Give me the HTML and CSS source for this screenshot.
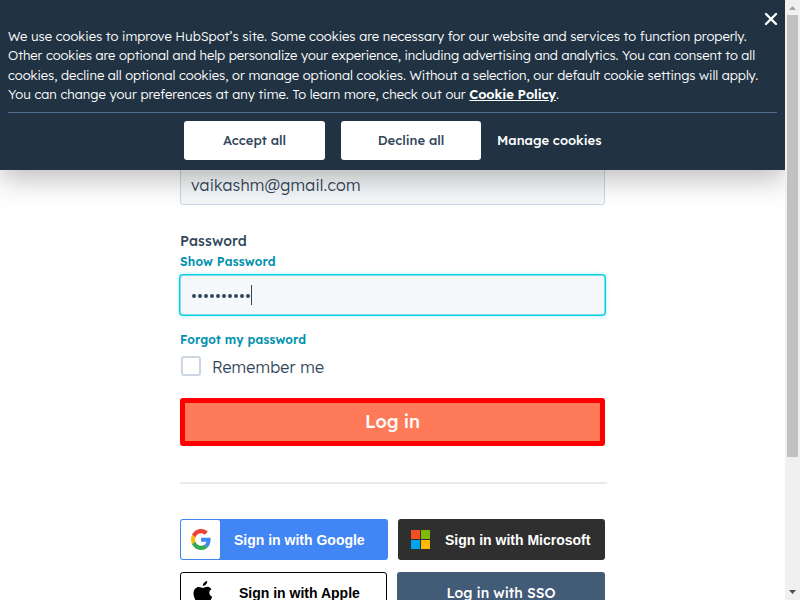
FILE: index.html
```html
<!DOCTYPE html>
<html lang="en">
<head>
<meta charset="utf-8">
<title>HubSpot Login</title>
<link rel="stylesheet" href="styles.css">
</head>
<body>
<div class="viewport">
  <main class="page">
    <form class="login">
      <div class="field email"><span class="email-text">vaikashm@gmail.com</span></div>
      <div class="label"><span class="label-text">Password</span></div>
      <div class="link"><span class="show-text">Show Password</span></div>
      <div class="field password">
        <span class="dots"><i></i><i></i><i></i><i></i><i></i><i></i><i></i><i></i><i></i><i></i></span><span class="caret"></span>
      </div>
      <div class="link forgot"><span class="forgot-text">Forgot my password</span></div>
      <div class="remember"><span class="checkbox"></span><span class="remember-text">Remember me</span></div>
      <div class="submit"><span class="submit-text">Log in</span></div>
      <div class="divider"></div>
      <div class="providers">
        <div class="provider google">
          <span class="google-logo"><svg width="20" height="21" viewBox="0 0 48 48" preserveAspectRatio="none"><path fill="#ea4335" d="M24 9.5c3.54 0 6.71 1.22 9.21 3.6l6.85-6.85C35.9 2.38 30.47 0 24 0 14.62 0 6.51 5.38 2.56 13.22l7.98 6.19C12.43 13.72 17.74 9.5 24 9.5z"/><path fill="#4285f4" d="M46.98 24.55c0-1.57-.15-3.09-.38-4.55H24v9.02h12.94c-.58 2.96-2.26 5.48-4.78 7.18l7.73 6c4.51-4.18 7.09-10.36 7.09-17.65z"/><path fill="#fbbc05" d="M10.53 28.59A14.5 14.5 0 0 1 9.77 24c0-1.6.27-3.14.76-4.59l-7.98-6.19A24 24 0 0 0 0 24c0 3.88.92 7.54 2.56 10.78z"/><path fill="#34a853" d="M24 48c6.48 0 11.93-2.13 15.89-5.81l-7.73-6c-2.15 1.45-4.92 2.3-8.16 2.3-6.26 0-11.57-4.22-13.47-9.91l-7.98 6.19C6.51 42.62 14.62 48 24 48z"/></svg></span>
          <span class="google-text">Sign in with Google</span>
        </div>
        <div class="provider microsoft">
          <span class="squares"><i class="red"></i><i class="green"></i><i class="blue"></i><i class="yellow"></i></span>
          <span class="microsoft-text">Sign in with Microsoft</span>
        </div>
        <div class="provider apple">
          <svg class="apple-logo" width="20" height="24" viewBox="0 0 20 24"><path d="M14.200 0c.2 2.500-1.800 5-4.400 5C9.600 2.600 11.800.4 14.200 0zM18.400 8.200c-3.100 1.900-2.600 6.200.7 7.500-.9 2.900-3 6.300-5.100 6.300-1.600 0-2.300-.9-4.200-.9S7.800 22 6.200 22C3.600 22 .5 16.700.5 12.500.5 8.200 3.200 6 5.800 6c1.800 0 3.100 1 4.200 1 1 0 2.500-1.200 4.600-1.200 1.600 0 2.900.9 3.800 2.400z"/></svg>
          <span class="apple-text">Sign in with Apple</span>
        </div>
        <div class="provider sso"><span class="sso-text">Log in with SSO</span></div>
      </div>
    </form>
    <section class="banner">
      <svg class="close" width="14" height="14" viewBox="0 0 14 14"><path d="M2 2l10 10M12 2L2 12"/></svg>
      <p class="notice">
        <span class="line line-1">We use cookies to improve HubSpot’s site. Some cookies are necessary for our website and services to function properly.</span>
        <span class="line line-2">Other cookies are optional and help personalize your experience, including advertising and analytics. You can consent to all</span>
        <span class="line line-3">cookies, decline all optional cookies, or manage optional cookies. Without a selection, our default cookie settings will apply.</span>
        <span class="line line-4">You can change your preferences at any time. To learn more, check out our <a class="policy">Cookie Policy</a>.</span>
      </p>
      <div class="actions">
        <span class="choice"><span class="accept-text">Accept all</span></span>
        <span class="choice decline"><span class="decline-text">Decline all</span></span>
        <span class="manage">Manage cookies</span>
      </div>
    </section>
  </main>
  <aside class="scrollbar">
    <svg width="7" height="4" viewBox="0 0 7 4"><path fill="#a3a3a3" d="M0 4 3.500 0 7 4z"/></svg>
    <span class="thumb"></span>
    <svg class="down" width="7" height="4" viewBox="0 0 7 4"><path fill="#505050" d="M0 0h7L3.500 4z"/></svg>
  </aside>
</div>
</body>
</html>
```

FILE: styles.css
```css
* { box-sizing: border-box; }
body {
  margin: 0;
  overflow: hidden;
  background: #fff;
  color: #33475b;
  font-family: "Lexend Deca", Lexend, Inter, sans-serif;
  font-weight: 300;
}
span { white-space: nowrap; }
.viewport { display: flex; width: 800px; height: 600px; overflow: hidden; }
.page { position: relative; width: 785px; overflow: hidden; }
.login { width: 425px; margin-left: 180px; padding-top: 165px; }
.field {
  display: flex;
  align-items: center;
  height: 40px;
  padding: 0 10px;
  border: 1px solid #cbd6e2;
  border-radius: 3px;
  background: #f5f8fa;
  font-size: 16px;
}
.email-text { letter-spacing: .19px; }
.label { height: 24px; margin-top: 24px; line-height: 24px; font-size: 14px; font-weight: 500; letter-spacing: .12px; }
.link { height: 18px; line-height: 18px; font-size: 12px; font-weight: 600; color: #0091ae; letter-spacing: .18px; }
.forgot-text { letter-spacing: .14px; }
.password {
  margin-top: 4px;
  border-color: #7fdee9;
  box-shadow: 0 0 0 1px #00d0e4, 0 0 4px 1px rgba(0, 208, 228, .3);
}
.dots { display: flex; gap: 2px; padding: 1px 0 0 .5px; }
.dots i { width: 4px; height: 4px; border-radius: 50%; background: #33475b; }
.caret { width: 1px; height: 20px; margin-left: 1.500px; background: #33475b; }
.forgot { margin-top: 16px; }
.remember { display: flex; align-items: center; height: 20px; margin-top: 7px; font-size: 16px; }
.remember-text { padding-top: 2px; letter-spacing: .18px; }
.checkbox { width: 20px; height: 20px; margin: 0 11px 0 1px; border: 2px solid #cbd6e2; border-radius: 3px; }
.submit {
  display: flex;
  align-items: center;
  justify-content: center;
  height: 48px;
  margin-top: 22px;
  padding-bottom: 2px;
  border: 5px solid #f00;
  border-radius: 3px;
  background: #ff7a59;
  color: #fff;
  font-size: 18px;
  font-weight: 500;
}
.divider { width: 427px; height: 2px; margin-top: 36px; background: #eaeaea; }
.providers {
  display: grid;
  grid-template-columns: 208px 208px;
  justify-content: space-between;
  row-gap: 12px;
  margin-top: 35px;
}
.provider { display: flex; align-items: center; height: 41px; border-radius: 3px; color: #fff; font: bold 14px "Liberation Sans", sans-serif; }
.google { background: #4285f4; }
.google-logo { display: flex; align-items: center; justify-content: center; width: 39px; height: 39px; margin: 0 14px 0 1px; padding-left: 1px; border-radius: 2px; background: #fff; }
.microsoft { width: 207px; margin-left: 1px; padding-left: 13px; background: #2f2f2f; }
.squares { display: grid; grid-template-columns: 9px 9px; gap: 1px; margin-right: 15px; }
.squares i { height: 9px; }
.red { background: #f25022; }
.green { background: #7fba00; }
.blue { background: #00a4ef; }
.yellow { background: #ffb900; }
.apple { width: 207px; padding-left: 12px; border: 1px solid #000; background: #fff; color: #000; }
.apple-logo { margin-right: 26px; }
.sso { justify-content: center; background: #425b76; font: 500 14px "Lexend Deca", Lexend, Inter, sans-serif; }
.banner {
  position: absolute;
  top: 0;
  left: 0;
  width: 785px;
  height: 170px;
  padding: 26.500px 8px 0;
  background: #213343;
  box-shadow: 0 8px 28px rgba(0, 0, 0, .28);
  color: #fff;
  font-size: 13px;
}
.close { position: absolute; top: 12px; right: 7px; stroke: #fff; stroke-width: 2.400; stroke-linecap: round; }
.notice { margin: 0; line-height: 19.500px; }
.line { display: block; }
.line-1 { letter-spacing: -.008px; }
.line-2 { letter-spacing: -.063px; }
.line-3 { letter-spacing: -.034px; }
.policy { font-weight: 600; letter-spacing: -.09px; text-decoration: underline; }
.actions { display: flex; align-items: center; width: 769px; margin-top: 7.500px; padding: 8px 0 0 176px; border-top: 1px solid #516f90; font-weight: 500; }
.choice { display: flex; align-items: center; justify-content: center; width: 141px; height: 39px; margin-right: 16px; padding-bottom: 2px; border-radius: 3px; background: #fff; color: #33475b; }
.decline { width: 140px; }
.manage { padding-bottom: 2px; }
.scrollbar { display: flex; flex-direction: column; align-items: center; width: 15px; height: 600px; padding: 6px 0; background: #f0f0f0; }
.thumb { width: 11px; height: 442px; margin-top: 5px; background: #c1c1c1; }
.down { margin-top: auto; }
```
